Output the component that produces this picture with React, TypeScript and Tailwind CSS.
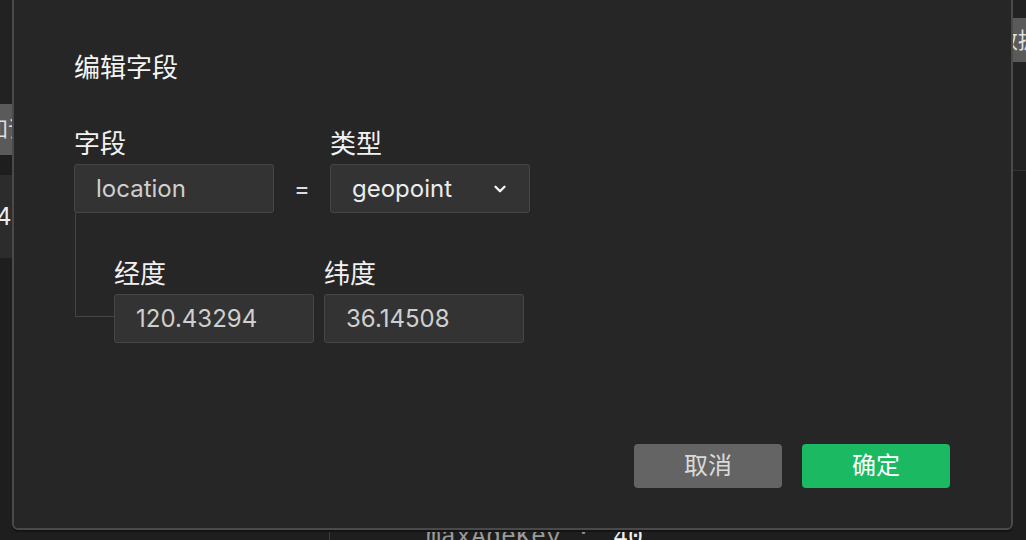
import React from "react";

const FONT = { fontFamily: '"Inter", "Noto Sans CJK SC", sans-serif' };

function Chevron() {
  return (
    <svg width="18" height="18" viewBox="0 0 24 24" fill="none" stroke="#f2f2f2" strokeWidth="3.2" strokeLinecap="round" strokeLinejoin="round">
      <path d="M6 9l6 6 6-6" />
    </svg>
  );
}

function Field({ label, value, select }: { label: string; value: string; select?: boolean }) {
  return (
    <div className="flex flex-col w-[200px]">
      <div className="text-[26px] leading-[36px] text-[#f2f2f2] mb-[2px]">{label}</div>
      <div className="h-[49px] bg-[#333333] border border-[#464646] rounded-[3px] flex items-center pl-[21px] pr-[20px]">
        <span className={select ? "text-[24px] text-[#ececec] flex-1" : "text-[24px] text-[#cfcfcf] flex-1"}>{value}</span>
        {select && <Chevron />}
      </div>
    </div>
  );
}

export default function App() {
  return (
    <div className="relative w-[1026px] h-[540px] overflow-hidden bg-[#1e1e1e]" style={FONT}>
      {/* background page */}
      <div className="flex h-full">
        <div className="w-[330px] shrink-0 border-r border-[#3a3a3a] flex flex-col">
          <div className="h-[104px] bg-[#222222]" />
          <div className="h-[51px] bg-[#5a5a5a] flex items-center overflow-hidden">
            <span className="ml-[-14px] text-[22px] text-[#e0e0e0] whitespace-nowrap">知识库</span>
          </div>
          <div className="h-[20px]" />
          <div className="h-[83px] bg-[#2c2c2c] flex items-center overflow-hidden">
            <span className="ml-[-4px] text-[24px] text-[#eeeeee]">4</span>
          </div>
          <div className="flex-1" />
        </div>
        <div className="flex-1 min-w-0 flex flex-col overflow-hidden">
          <div className="h-[171px] shrink-0 bg-[#222222] border-b border-[#333333] pt-[18px] pl-[660px]">
            <div className="h-[44px] bg-[#5a5a5a] flex items-center pl-[6px] text-[22px] text-[#e0e0e0] whitespace-nowrap overflow-hidden">数据源</div>
          </div>
          <div className="flex-1 bg-[#1e1e1e]" />
          <div className="h-[12px] shrink-0 pl-[96px] flex items-start whitespace-nowrap" style={{ fontFamily: '"Liberation Mono", monospace' }}>
            <span className="text-[25px] leading-none text-[#9a9a9a] mt-[-3px]">maxAgeKey :</span>
            <span className="text-[25px] leading-none text-[#f0f0f0] ml-[22px] mt-[-3px]">40</span>
          </div>
        </div>
      </div>

      {/* dialog overlay */}
      <div className="absolute left-[12px] top-[-12px] w-[1001px] h-[542px] bg-[#262626] border-2 border-[#4a4a4a] rounded-[6px] shadow-[0_2px_0_#141414] flex flex-col pl-[60px] pr-[61px] pt-[60px]">
        <div className="text-[26px] leading-[36px] text-[#f4f4f4]">编辑字段</div>
        <div className="mt-[40px] flex items-end">
          <Field label="字段" value="location" />
          <div className="w-[56px] h-[49px] flex items-center justify-center text-[24px] text-[#dddddd]">=</div>
          <Field label="类型" value="geopoint" select />
        </div>
        <div className="flex">
          <div className="w-[39px] h-[104px] border-l border-b border-[#454545] ml-[1px]" />
          <div className="flex gap-[10px] pt-[43px]">
            <Field label="经度" value="120.43294" />
            <Field label="纬度" value="36.14508" />
          </div>
        </div>
        <div className="mt-[101px] flex justify-end gap-[20px]">
          <button className="w-[148px] h-[44px] rounded-[4px] bg-[#646464] text-[24px] text-[#dadada]">取消</button>
          <button className="w-[148px] h-[44px] rounded-[4px] bg-[#1bba62] text-[24px] text-[#ffffff]">确定</button>
        </div>
      </div>
    </div>
  );
}
